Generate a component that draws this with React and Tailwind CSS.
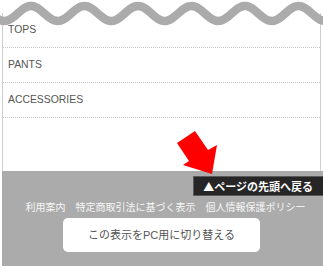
import React from 'react';

const items = ['TOPS', 'PANTS', 'ACCESSORIES'];

// sine band along the top edge
const wavePoints = () => {
  const pts = [];
  for (let x = -4; x <= 330; x += 2) {
    const y = 13.5 - 7.5 * Math.cos((2 * Math.PI * (x - 31)) / 53.5);
    pts.push(`${x},${y.toFixed(2)}`);
  }
  return pts.join(' ');
};

const App = () => {
  return (
    <div className="relative w-[323px] h-[271px] bg-white overflow-hidden pl-[2px] font-['Liberation_Sans','Noto_Sans_CJK_JP',sans-serif]">
      <ul className="mt-[13px] mr-[2px] border-x border-[#cfcfcf]">
        {items.map((item) => (
          <li
            key={item}
            className="h-[35px] flex items-center pl-[5px] text-[10.4px] text-[#555] border-b border-dotted border-[#c8c8c8]"
          >
            {item}
          </li>
        ))}
        <li className="h-[53px]" />
      </ul>

      <footer className="h-[95px] bg-[#ababab] pt-[5px]">
        <div className="flex justify-end">
          <a className="h-[20px] flex items-center pl-[9px] pr-[10px] bg-[#262626] border border-[#5a5a5a] border-r-0 text-white font-bold text-[11px] leading-none font-['Noto_Sans_CJK_JP',sans-serif]">
            ▲ページの先頭へ戻る
          </a>
        </div>
        <div className="mt-[5px] h-[13px] flex justify-center gap-[10px] pl-[6px] text-[10px] leading-[13px] text-[#f7f7f7]">
          <a>利用案内</a>
          <a>特定商取引法に基づく表示</a>
          <a>個人情報保護ポリシー</a>
        </div>
        <button className="mt-[4px] ml-[61px] w-[197px] h-[34px] flex items-center justify-center bg-white rounded-[5px] text-[11px] text-[#555]">
          この表示をPC用に切り替える
        </button>
      </footer>

      <svg className="absolute top-0 left-0" width="323" height="30" viewBox="0 0 323 30">
        <polyline points={wavePoints()} fill="none" stroke="#ababab" strokeWidth="8.5" />
      </svg>

      <svg className="absolute top-0 left-0 pointer-events-none" width="323" height="271" viewBox="0 0 323 271">
        <polygon
          points="177,143 195,131 208,150 217,145 212,174 183,165 189,161"
          fill="#ff0000"
        />
      </svg>
    </div>
  );
};

export default App;
